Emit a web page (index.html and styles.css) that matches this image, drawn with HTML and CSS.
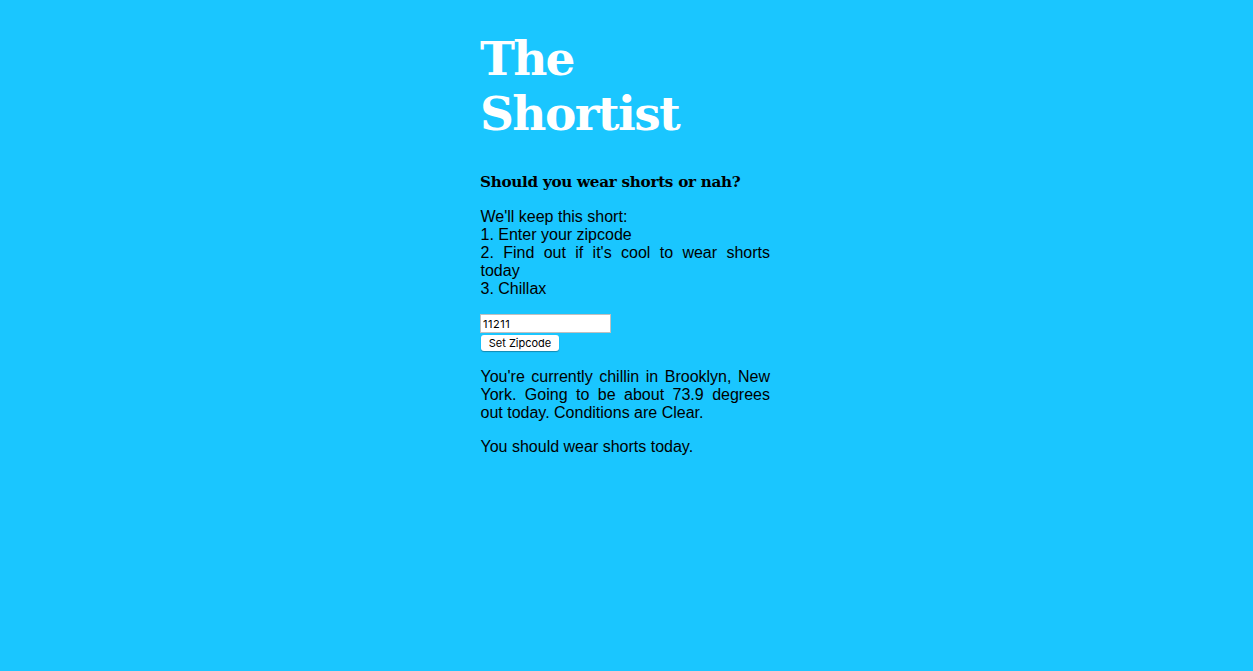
FILE: index.html
```html
<!DOCTYPE html>
<html lang="en">
<head>
<meta charset="utf-8">
<title>The Shortist</title>
<link rel="stylesheet" href="styles.css">
</head>
<body>
<main class="page">
  <h1 class="title"><span class="title-top">The</span><br><span class="title-bottom">Shortist</span></h1>
  <h2 class="tagline">Should you wear shorts or nah?</h2>
  <p class="copy">We'll keep this short:<br>1. Enter your zipcode<br>2. Find out if it's cool to wear shorts today<br>3. Chillax</p>
  <form class="zip-form">
    <input class="zip-input" type="text" value="11211" aria-label="Zipcode">
    <button class="zip-button" type="button">Set Zipcode</button>
  </form>
  <p class="copy">You're currently chillin in Brooklyn, New York. Going to be about 73.9 degrees out today. Conditions are Clear.</p>
  <p class="copy">You should wear shorts today.</p>
</main>
</body>
</html>
```
FILE: styles.css
```css
body {
  margin: 0;
  background: #1ac6ff;
  color: #000;
  font-family: "Liberation Sans", Arial, sans-serif;
}
.page {
  width: 290px;
  margin: 0 auto;
  padding: 31px 3px 0 0;
}
.title {
  margin: 0;
  color: #fff;
  font: bold 47px/55px Georgia, "DejaVu Serif", serif;
  white-space: nowrap;
}
.title-top { letter-spacing: -1.8px; }
.title-bottom { letter-spacing: -1.6px; }
.tagline {
  margin: 32px 0 0;
  font: bold 15.2px/19px Georgia, "DejaVu Serif", serif;
  white-space: nowrap;
  letter-spacing: -0.28px;
}
.copy {
  margin: 16px 0;
  padding-left: 0.5px;
  font-size: 16px;
  line-height: 18px;
  text-align: justify;
}
.zip-form {
  display: flex;
  flex-direction: column;
  align-items: flex-start;
  gap: 2px;
}
.zip-input {
  box-sizing: border-box;
  width: 131px;
  height: 19px;
  padding: 1px 2px;
  border: 1px solid #c0c0c0;
  background: #fff;
  font: 11px Inter, "Liberation Sans", sans-serif;
  letter-spacing: 0.5px;
}
.zip-button {
  box-sizing: border-box;
  width: 78px;
  height: 16px;
  margin: 0 0 1px 1px;
  padding: 0;
  border: 0;
  border-radius: 3px;
  background: #fff;
  box-shadow: 0 1px 1px rgba(0, 0, 0, 0.3);
  color: #000;
  font: 11px Inter, "Liberation Sans", sans-serif;
}
```
